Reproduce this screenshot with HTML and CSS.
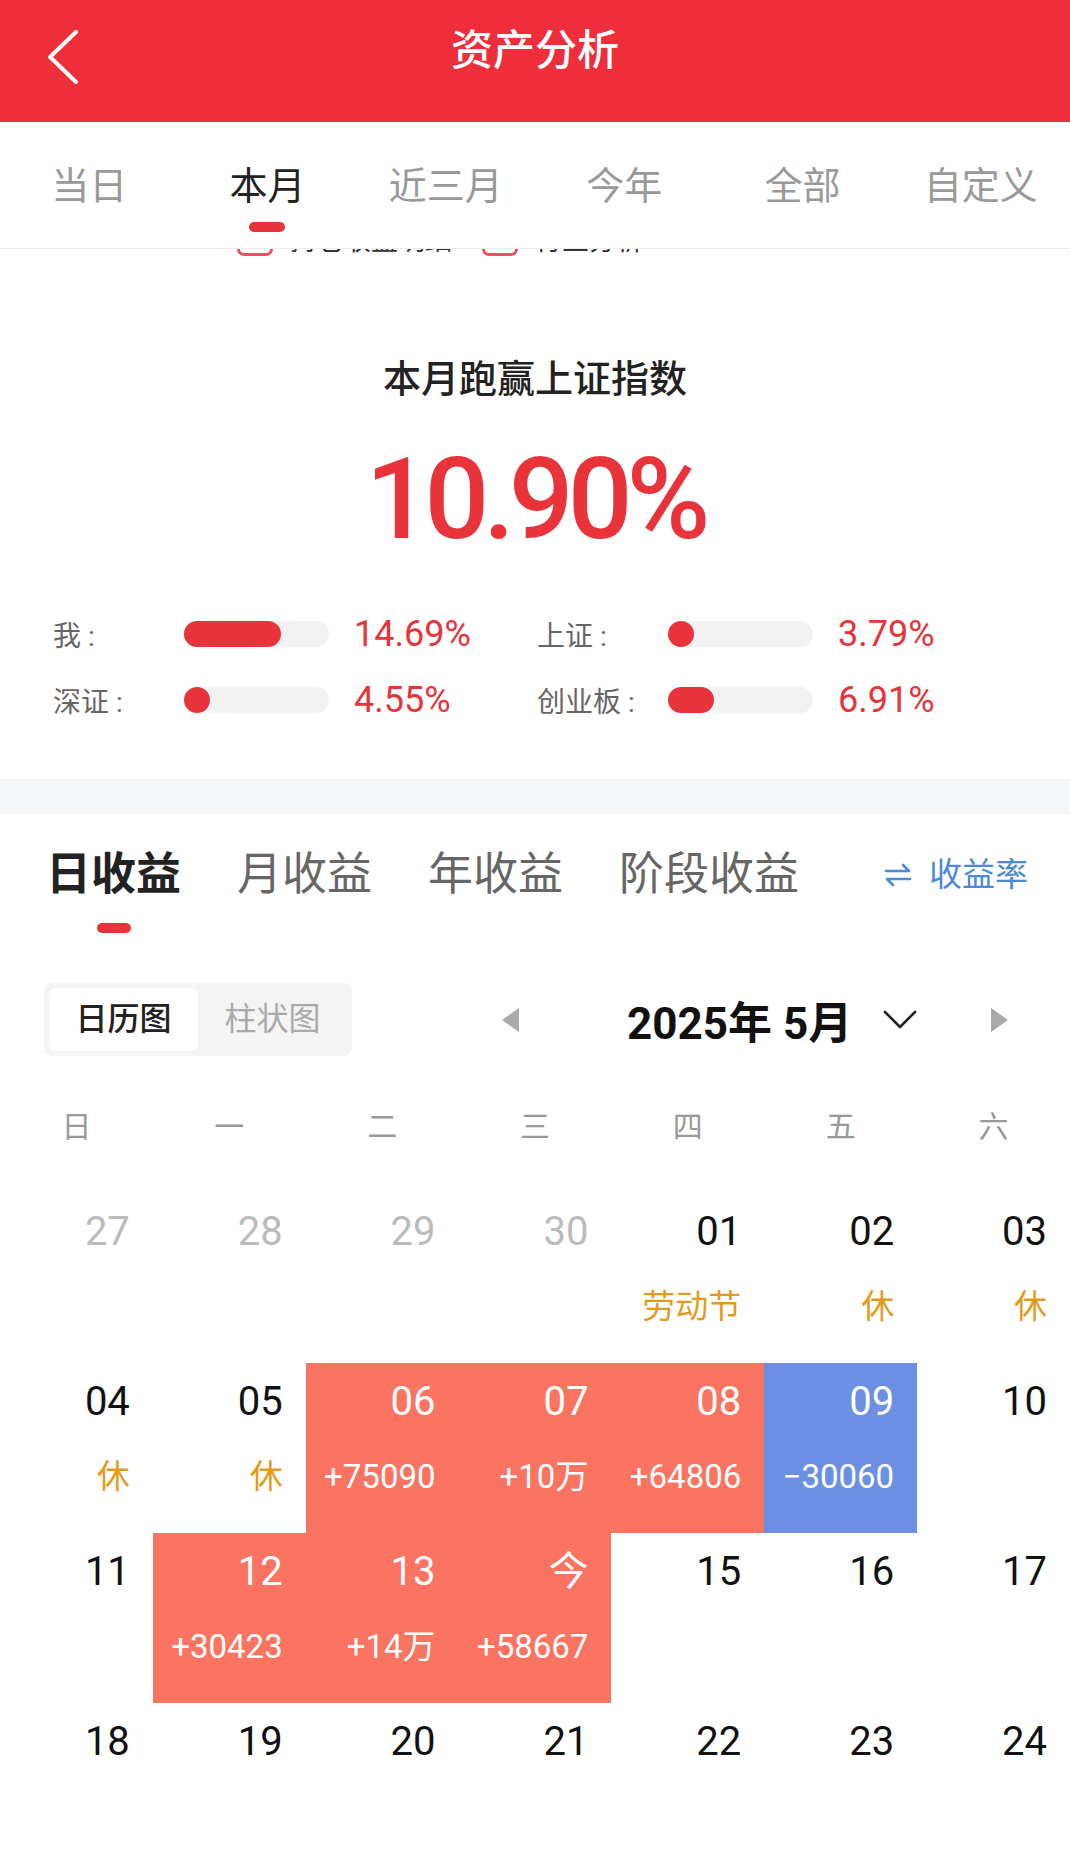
FILE: index.html
```html
<!DOCTYPE html>
<html lang="zh-CN">
<head>
    <meta charset="UTF-8">
    <meta name="viewport" content="width=device-width, initial-scale=1.0">
    <title>资产分析</title>
    <link rel="stylesheet" href="styles.css">
</head>
<body>
    <header class="topbar">
        <svg class="back" viewBox="0 0 40 60" fill="none" stroke="#fff" stroke-width="4" stroke-linecap="round" stroke-linejoin="round">
            <polyline points="32,6 6,31 32,56"/>
        </svg>
        <h1>资产分析</h1>
        <div></div>
    </header>

    <nav class="period-tabs">
        <div class="period-tab">当日</div>
        <div class="period-tab active">本月</div>
        <div class="period-tab">近三月</div>
        <div class="period-tab">今年</div>
        <div class="period-tab">全部</div>
        <div class="period-tab">自定义</div>
    </nav>

    <!-- content scrolled under the sticky tabs -->
    <div class="peek">
        <div class="peek-row">
            <span class="check"></span><span class="peek-text">持仓收益明细</span>
            <span class="check second"></span><span class="peek-text">行业分析</span>
        </div>
    </div>

    <section class="summary">
        <div class="summary-title">本月跑赢上证指数</div>
        <div class="summary-value">10.90%</div>
        <div class="compare">
            <div class="compare-item">
                <span class="compare-label">我 :</span>
                <div class="track"><div class="fill" style="width: 97px"></div></div>
                <span class="compare-pct">14.69%</span>
            </div>
            <div class="compare-item">
                <span class="compare-label">上证 :</span>
                <div class="track"><div class="fill" style="width: 26px"></div></div>
                <span class="compare-pct">3.79%</span>
            </div>
            <div class="compare-item">
                <span class="compare-label">深证 :</span>
                <div class="track"><div class="fill" style="width: 26px"></div></div>
                <span class="compare-pct">4.55%</span>
            </div>
            <div class="compare-item">
                <span class="compare-label">创业板 :</span>
                <div class="track"><div class="fill" style="width: 46px"></div></div>
                <span class="compare-pct">6.91%</span>
            </div>
        </div>
    </section>

    <div class="divider"></div>

    <section class="income">
        <div class="income-tabs">
            <div class="income-tab active">日收益</div>
            <div class="income-tab">月收益</div>
            <div class="income-tab">年收益</div>
            <div class="income-tab">阶段收益</div>
            <div class="rate-switch">
                <svg class="swap" viewBox="0 0 28 28" fill="none" stroke="currentColor" stroke-width="2.6" stroke-linecap="round" stroke-linejoin="round">
                    <path d="M2 10 H25 L19 4"/>
                    <path d="M26 18 H3 L9 24"/>
                </svg>
                收益率
            </div>
        </div>

        <div class="toolbar">
            <div class="view-toggle">
                <div class="view-btn active">日历图</div>
                <div class="view-btn">柱状图</div>
            </div>
            <span class="tri tri-left"></span>
            <span class="month-title">2025年 5月</span>
            <svg class="chevron" viewBox="0 0 34 20" fill="none" stroke="#222" stroke-width="2.6" stroke-linecap="round" stroke-linejoin="round">
                <polyline points="2,2 17,17 32,2"/>
            </svg>
            <span class="tri tri-right"></span>
        </div>

        <div class="weekdays">
            <span>日</span><span>一</span><span>二</span><span>三</span><span>四</span><span>五</span><span>六</span>
        </div>

        <div class="days">
            <div class="day other"><div class="day-num">27</div></div>
            <div class="day other"><div class="day-num">28</div></div>
            <div class="day other"><div class="day-num">29</div></div>
            <div class="day other"><div class="day-num">30</div></div>
            <div class="day"><div class="day-num">01</div><div class="day-sub">劳动节</div></div>
            <div class="day"><div class="day-num">02</div><div class="day-sub">休</div></div>
            <div class="day"><div class="day-num">03</div><div class="day-sub">休</div></div>

            <div class="day"><div class="day-num">04</div><div class="day-sub">休</div></div>
            <div class="day"><div class="day-num">05</div><div class="day-sub">休</div></div>
            <div class="day up"><div class="day-num">06</div><div class="day-sub amount">+75090</div></div>
            <div class="day up"><div class="day-num">07</div><div class="day-sub amount">+10万</div></div>
            <div class="day up"><div class="day-num">08</div><div class="day-sub amount">+64806</div></div>
            <div class="day down"><div class="day-num">09</div><div class="day-sub amount">−30060</div></div>
            <div class="day"><div class="day-num">10</div></div>

            <div class="day"><div class="day-num">11</div></div>
            <div class="day up"><div class="day-num">12</div><div class="day-sub amount">+30423</div></div>
            <div class="day up"><div class="day-num">13</div><div class="day-sub amount">+14万</div></div>
            <div class="day up"><div class="day-num">今</div><div class="day-sub amount">+58667</div></div>
            <div class="day"><div class="day-num">15</div></div>
            <div class="day"><div class="day-num">16</div></div>
            <div class="day"><div class="day-num">17</div></div>

            <div class="day"><div class="day-num">18</div></div>
            <div class="day"><div class="day-num">19</div></div>
            <div class="day"><div class="day-num">20</div></div>
            <div class="day"><div class="day-num">21</div></div>
            <div class="day"><div class="day-num">22</div></div>
            <div class="day"><div class="day-num">23</div></div>
            <div class="day"><div class="day-num">24</div></div>
        </div>
    </section>
</body>
</html>
```

FILE: styles.css
```css
* {
    box-sizing: border-box;
}
body {
    margin: 0;
    font-family: Roboto, "Noto Sans CJK SC", sans-serif;
    background: #fff;
    color: #222;
}

/* header */
.topbar {
    display: grid;
    grid-template-columns: 1fr auto 1fr;
    height: 122px;
    background: #ee2e3b;
}
.back {
    width: 40px;
    height: 60px;
    margin: 26px 0 0 44px;
}
.topbar h1 {
    margin: 0;
    font-size: 42px;
    font-weight: 500;
    line-height: 102px;
    color: #fff;
}

/* period tabs */
.period-tabs {
    display: grid;
    grid-template-columns: repeat(6, 1fr);
    height: 127px;
    border-bottom: 1px solid #ececec;
}
.period-tab {
    display: flex;
    flex-direction: column;
    align-items: center;
    padding-top: 39px;
    font-size: 38px;
    line-height: 50px;
    color: #999;
}
.period-tab.active {
    color: #222;
}
.period-tab.active::after {
    content: "";
    width: 36px;
    height: 10px;
    margin-top: 11px;
    border-radius: 5px;
    background: #e8333a;
}

.peek {
    height: 9px;
    overflow: hidden;
}
.peek-row {
    display: flex;
    align-items: center;
    height: 40px;
    margin-top: -31px;
    padding-left: 237px;
}
.check {
    width: 36px;
    height: 36px;
    border: 3px solid #e5545c;
    border-radius: 7px;
}
.check.second {
    margin-left: 30px;
}
.peek-text {
    margin-left: 17px;
    font-size: 27px;
    color: #333;
}

/* summary */
.summary {
    padding: 96px 0 54px;
    text-align: center;
}
.summary-title {
    font-size: 38px;
    line-height: 50px;
    font-weight: 500;
    color: #222;
}
.summary-value {
    margin-top: 30px;
    font-size: 114px;
    line-height: 130px;
    font-weight: 500;
    letter-spacing: -6px;
    color: #e8333a;
}
.compare {
    display: grid;
    grid-template-columns: 484px auto;
    row-gap: 16px;
    margin-top: 45px;
    padding-left: 53px;
    text-align: left;
}
.compare-item {
    display: flex;
    align-items: center;
    height: 50px;
}
.compare-label {
    width: 131px;
    font-size: 28px;
    color: #666;
}
.track {
    width: 145px;
    height: 26px;
    border-radius: 13px;
    background: #f2f2f2;
}
.fill {
    height: 100%;
    border-radius: 13px;
    background: #e8333a;
}
.compare-pct {
    margin-left: 25px;
    font-size: 36px;
    color: #e8333a;
}

.divider {
    height: 35px;
    background: #f5f6f8;
}

/* income tabs */
.income-tabs {
    display: flex;
    align-items: flex-start;
    gap: 56px;
    padding: 31px 42px 0 46px;
}
.income-tab {
    display: flex;
    flex-direction: column;
    align-items: center;
    font-size: 45px;
    line-height: 60px;
    color: #666;
}
.income-tab.active {
    font-weight: 700;
    color: #222;
}
.income-tab.active::after {
    content: "";
    width: 34px;
    height: 10px;
    margin-top: 18px;
    border-radius: 5px;
    background: #e8333a;
}
.rate-switch {
    display: flex;
    align-items: center;
    margin-left: auto;
    font-size: 33px;
    line-height: 60px;
    color: #4a8ad6;
}
.swap {
    width: 28px;
    height: 28px;
    margin-right: 17px;
}

/* toolbar */
.toolbar {
    display: flex;
    align-items: center;
    margin-top: 50px;
    padding-left: 44px;
}
.view-toggle {
    display: flex;
    padding: 5px;
    border-radius: 8px;
    background: #f4f4f4;
}
.view-btn {
    width: 149px;
    height: 63px;
    line-height: 63px;
    text-align: center;
    font-size: 32px;
    color: #aaa;
    border-radius: 6px;
}
.view-btn.active {
    background: #fff;
    color: #222;
    font-weight: 500;
}
.tri {
    width: 0;
    height: 0;
    border-top: 12px solid transparent;
    border-bottom: 12px solid transparent;
}
.tri-left {
    margin-left: 150px;
    border-right: 17px solid #aaa;
}
.tri-right {
    margin-left: 74px;
    border-left: 17px solid #aaa;
}
.month-title {
    margin-left: 108px;
    font-size: 44px;
    font-weight: 700;
    color: #111;
}
.chevron {
    width: 34px;
    height: 20px;
    margin-left: 31px;
}

/* calendar */
.weekdays {
    display: grid;
    grid-template-columns: repeat(7, 1fr);
    margin-top: 51px;
    font-size: 30px;
    line-height: 40px;
    color: #999;
    text-align: center;
}
.days {
    display: grid;
    grid-template-columns: repeat(7, 1fr);
    margin-top: 46px;
}
.day {
    height: 170px;
    padding: 14px 23px 0 0;
    text-align: right;
}
.day-num {
    font-size: 40px;
    line-height: 50px;
    color: #111;
}
.day.other .day-num {
    color: #bbb;
}
.day-sub {
    margin-top: 28px;
    font-size: 33px;
    line-height: 44px;
    color: #e39b1e;
}
.day-sub.amount {
    font-size: 33px;
}
.day.up {
    background: #fa7461;
}
.day.down {
    background: #6b8fe3;
}
.day.up .day-num,
.day.up .day-sub,
.day.down .day-num,
.day.down .day-sub {
    color: #fff;
}
```
